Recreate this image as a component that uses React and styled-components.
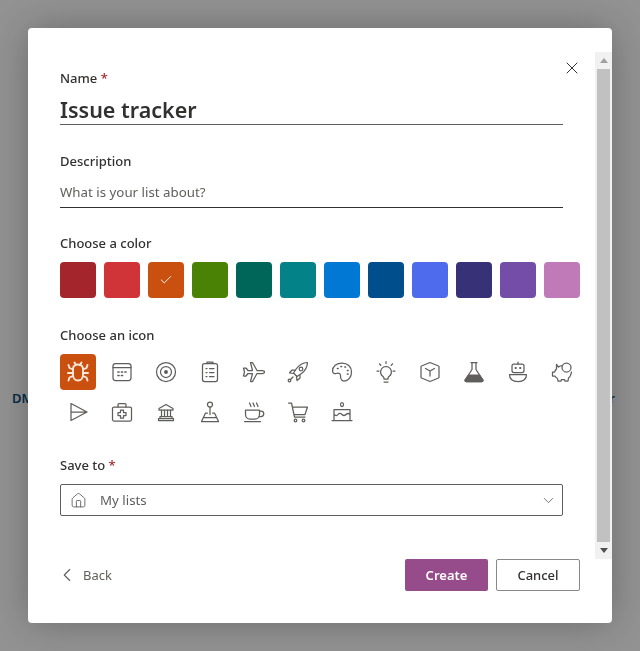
import React from 'react';
import styled, { createGlobalStyle } from 'styled-components';
import { Check, ChevronDown, ChevronLeft, Home, X } from 'lucide-react';

const GlobalStyle = createGlobalStyle`
    html, body {
        margin: 0;
        padding: 0;
        height: 100%;
        overflow: hidden;
        background: #f4f4f4;
        font-family: 'Noto Sans', 'Open Sans', sans-serif;
        color: #323130;
    }
`;

const colors = [
    '#a4262c', '#d13438', '#ca5010', '#498205', '#00665a', '#038387',
    '#0078d4', '#004e8c', '#4f6bed', '#373277', '#744da9', '#c07ab8',
];

const iconShapes = {
    bug: (
        <>
            <path d="M7 9c0-2.5 2-4.5 5-4.5s5 2 5 4.500v6c0 3-2 5.500-5 5.500s-5-2.500-5-5.500z" />
            <path d="M8.500 2.500l1.500 2.500M15.500 2.500L14 5M7 9.500L3.500 8 2.500 5M17 9.500L20.500 8l1-3M7 13H2M17 13h5M7 16l-3.500 1.500-1 3M17 16l3.500 1.500 1 3" />
        </>
    ),
    calendar: (
        <>
            <rect x="3" y="3.500" width="18" height="17" rx="2.500" />
            <path d="M3 7.500h18" />
            <path d="M8 12h1M11.500 12h1M15 12h1M8 15.500h1M11.500 15.500h1" strokeWidth="1.700" />
        </>
    ),
    target: (
        <>
            <circle cx="12" cy="12" r="9.500" />
            <circle cx="12" cy="12" r="5.500" />
            <circle cx="12" cy="12" r="1.300" fill="currentColor" />
        </>
    ),
    clipboard: (
        <>
            <rect x="4.500" y="3.500" width="15" height="18" rx="2" />
            <path d="M9 3.500V2h6v1.500M8 8.500h1M11.500 8.500H16M8 12.500h1M11.500 12.500H16M8 16.500h1M11.500 16.500H16" />
        </>
    ),
    plane: (
        <path d="M22.500 12c0-1-1-1.500-2.500-1.500h-5L10.500 2.500H8.500l2 8H6L4 8H1.500l1 4-1 4H4l2-2.500h4.500l-2 8h2l4.500-8h5c1.500 0 2.500-.5 2.500-1.500z" />
    ),
    rocket: (
        <>
            <path d="M21.500 2.500c-5 .3-8.500 2.500-11 6L7.500 13l3.500 3.500 4.500-3c3.500-2.500 5.700-6 6-11z" />
            <circle cx="15" cy="9" r="1.800" />
            <path d="M9 10H6l-2.500 3 4 .5M14 15v3l-3 2.500-.5-4M7 17l-2.500 2.500" />
            <circle cx="3.500" cy="20.500" r="1.300" />
        </>
    ),
    palette: (
        <>
            <path d="M12 3C6.500 3 2.500 6.500 2.500 11c0 2 2 3 3.500 2.500 2-.7 4.500-.5 4.500 2 0 2 .5 5.500 3.500 5.500 4.500 0 7.500-4 7.500-9 0-5.500-4-9-9.500-9z" />
            <path d="M7.500 8.500h.5M11 6.500h.5M15 7h.5M17.500 10.500h.5M17.500 14h.5" strokeWidth="1.700" />
        </>
    ),
    bulb: (
        <>
            <path d="M12 6.500a5.500 5.500 0 0 0-3 10c.7.5 1 1 1 2v.5h4v-.5c0-1 .3-1.500 1-2a5.500 5.500 0 0 0-3-10z" />
            <path d="M10 22h4M12 1.500v2M5.500 4l1.300 1.300M18.500 4l-1.300 1.300M3 11h2M19 11h2" />
        </>
    ),
    cube: (
        <>
            <path d="M12 2.500l8.500 3.500c.3.100.5.400.5.700v10.600c0 .3-.2.600-.5.700L12 21.500 3.500 18c-.3-.1-.5-.4-.5-.7V6.700c0-.3.2-.6.500-.7z" />
            <path d="M7.500 8.500L12 11l4.500-2.500M12 11v5" />
        </>
    ),
    flask: (
        <>
            <path d="M9 2.500h6M10 2.500v7L3.500 19.500c-.7 1.200 0 2 1 2h15c1 0 1.700-.8 1-2L14 9.500v-7" />
            <path d="M6.500 15h11l3.500 5c.3 1-.3 1.500-1.500 1.500h-15c-1.200 0-1.800-.5-1.500-1.500z" fill="currentColor" />
        </>
    ),
    bot: (
        <>
            <rect x="6" y="4" width="12" height="8.500" rx="2" />
            <path d="M12 2v2M3.500 14.500h17c0 4.500-3.500 7-8.500 7s-8.500-2.500-8.500-7z" />
            <path d="M9.500 8h.5M14 8h.5" strokeWidth="1.800" />
        </>
    ),
    piggy: (
        <>
            <circle cx="16.500" cy="7.500" r="4.500" />
            <path d="M12.500 5.500c-1.500 0-3 .5-4 1.500L6.500 4.500V9C5.500 10 5 11 4.500 12h-2v4H5c.5 1 1.500 2 2.500 2.500L8 21h3l.5-1.500h3L15 21h3l.5-3c1.500-1 2.500-3 3-6" />
        </>
    ),
    play: (
        <path d="M5 3.500L21 12 5 20.500zM5 12h16" />
    ),
    medkit: (
        <>
            <rect x="2.500" y="7" width="19" height="14" rx="1.500" />
            <path d="M8 7V4.500c0-.5.5-1 1-1h6c.5 0 1 .5 1 1V7" />
            <path d="M10.500 10h3v2.500H16v3h-2.500V18h-3v-2.500H8v-3h2.500z" />
        </>
    ),
    bank: (
        <>
            <path d="M12 4.500L5 8.500v1.500h14V8.500z" />
            <path d="M7.500 10v6.500M10.500 10v6.500M13.500 10v6.500M16.500 10v6.500M6 16.500h12v2H6zM4.500 18.500h15v2h-15z" />
        </>
    ),
    joystick: (
        <>
            <circle cx="12" cy="4.500" r="2.500" />
            <path d="M12 7v7.500M9.500 13H7.500L3.500 21.500h17L16.500 13h-2M6 17.500h12" />
        </>
    ),
    coffee: (
        <>
            <path d="M3.500 10h14v4.500c0 2.500-2 4.500-4.500 4.500H8c-2.500 0-4.500-2-4.500-4.500z" />
            <path d="M17.500 11h1.500a2.700 2.700 0 0 1 0 5.500H17M2.500 21.500h16M7.500 3l1.500 3.500M11 3l1.500 3.500M14.500 3L16 6.500" />
        </>
    ),
    cart: (
        <>
            <path d="M2.500 3h3l3 14h10.500M6.500 7h15l-2.500 7.500H8" />
            <circle cx="9.500" cy="20.500" r="1.300" />
            <circle cx="17.500" cy="20.500" r="1.300" />
        </>
    ),
    cake: (
        <>
            <ellipse cx="12" cy="4.500" rx="1.500" ry="2" />
            <path d="M4 9.500h16v11H4zM2 20.500h20M4 14c1.500 2 3 2 4 .5s2.500-1.500 4 0 2.500 1.500 4 0 2.500-1.500 4 0" />
        </>
    ),
};

const iconNames = Object.keys(iconShapes);

const Icon = ({ name, selected }) => (
    <IconTile $selected={selected}>
        <svg width="24" height="24" viewBox="0 0 24 24" fill="none" stroke="currentColor" strokeWidth={selected ? 1.9 : 1.25} strokeLinecap="round" strokeLinejoin="round">
            {iconShapes[name]}
        </svg>
    </IconTile>
);

export default function App() {
    return (
        <>
            <GlobalStyle />
            <Behind>
                <span>DM</span>
                <span>for</span>
            </Behind>
            <Overlay>
                <Dialog>
                    <CloseButton><X size={20} strokeWidth={1.2} /></CloseButton>
                    <Body>
                        <Content>
                            <Label>Name <Required>*</Required></Label>
                            <TitleInput>Issue tracker</TitleInput>

                            <Label $top={26}>Description</Label>
                            <TextInput>What is your list about?</TextInput>

                            <Label $top={25}>Choose a color</Label>
                            <Swatches>
                                {colors.map((c, i) => (
                                    <Swatch key={c} $color={c}>
                                        {i === 2 && <Check size={14} strokeWidth={1.6} />}
                                    </Swatch>
                                ))}
                            </Swatches>

                            <Label $top={27}>Choose an icon</Label>
                            <Icons>
                                {iconNames.map((name, i) => (
                                    <Icon key={name} name={name} selected={i === 0} />
                                ))}
                            </Icons>

                            <Label $top={25}>Save to <Required>*</Required></Label>
                            <Select>
                                <Home size={17} strokeWidth={1.25} color="#605e5c" />
                                <SelectText>My lists</SelectText>
                                <ChevronDown size={17} strokeWidth={1.2} color="#605e5c" />
                            </Select>
                        </Content>
                        <ScrollBar>
                            <ArrowUp />
                            <Thumb />
                            <ArrowDown />
                        </ScrollBar>
                    </Body>
                    <Footer>
                        <BackLink><ChevronLeft size={22} strokeWidth={1.2} />Back</BackLink>
                        <Actions>
                            <PrimaryButton>Create</PrimaryButton>
                            <SecondaryButton>Cancel</SecondaryButton>
                        </Actions>
                    </Footer>
                </Dialog>
            </Overlay>
        </>
    );
}

const Behind = styled.div`
    display: flex;
    justify-content: space-between;
    padding: 390px 25px 0 12px;
    font-size: 13px;
    line-height: 16px;
    font-weight: 600;
    color: #0b4a78;
`;

const Overlay = styled.div`
    position: fixed;
    inset: 0;
    background: rgba(0, 0, 0, 0.4);
`;

const Dialog = styled.div`
    position: absolute;
    left: 28px;
    top: 28px;
    width: 584px;
    height: 595px;
    padding-top: 24px;
    box-sizing: border-box;
    display: flex;
    flex-direction: column;
    background: #fff;
    border-radius: 4px;
    box-shadow: 0 0 40px rgba(0, 0, 0, 0.28);
`;

const CloseButton = styled.div`
    position: absolute;
    top: 30px;
    right: 30px;
    width: 20px;
    height: 20px;
    display: flex;
    color: #323130;
`;

const Body = styled.div`
    display: flex;
    height: 507px;
`;

const Content = styled.div`
    flex: 1;
    padding: 16px 15px 0 32px;
`;

const Label = styled.div`
    margin-top: ${p => p.$top || 0}px;
    font-size: 13px;
    line-height: 20px;
    font-weight: 500;
    color: #323130;
`;

const Required = styled.span`
    color: #a4262c;
`;

const TitleInput = styled.div`
    width: 503px;
    height: 36px;
    line-height: 44px;
    font-size: 21.5px;
    font-weight: 600;
    border-bottom: 1px solid #605e5c;
    overflow: hidden;
`;

const TextInput = styled.div`
    width: 503px;
    height: 36px;
    line-height: 42px;
    font-size: 13.3px;
    color: #605e5c;
    border-bottom: 1px solid #323130;
`;

const Swatches = styled.div`
    display: flex;
    gap: 8px;
    margin-top: 9px;
`;

const Swatch = styled.div`
    width: 36px;
    height: 36px;
    border-radius: 4px;
    background: ${p => p.$color};
    color: #fff;
    display: flex;
    align-items: center;
    justify-content: center;
`;

const Icons = styled.div`
    display: grid;
    grid-template-columns: repeat(12, 36px);
    grid-auto-rows: 36px;
    gap: 4px 8px;
    margin-top: 9px;
`;

const IconTile = styled.div`
    display: flex;
    align-items: center;
    justify-content: center;
    border-radius: 4px;
    color: ${p => (p.$selected ? '#ffe9dc' : '#605e5c')};
    background: ${p => (p.$selected ? '#ca5010' : 'transparent')};
`;

const Select = styled.div`
    width: 503px;
    height: 32px;
    margin-top: 9px;
    box-sizing: border-box;
    padding: 0 5px 0 9px;
    display: flex;
    align-items: center;
    border: 1px solid #605e5c;
    border-radius: 2px;
`;

const SelectText = styled.span`
    flex: 1;
    margin-left: 13px;
    font-size: 13.3px;
    color: #605e5c;
`;

const ScrollBar = styled.div`
    width: 17px;
    display: flex;
    flex-direction: column;
    align-items: center;
    background: #f1f1f1;
`;

const ArrowUp = styled.div`
    width: 0;
    height: 0;
    margin: 6px 0;
    border: 4px solid transparent;
    border-top: 0;
    border-bottom: 5px solid #a0a0a0;
`;

const Thumb = styled.div`
    flex: 1;
    width: 13px;
    background: #c1c1c1;
`;

const ArrowDown = styled.div`
    width: 0;
    height: 0;
    margin: 6px 0;
    border: 4px solid transparent;
    border-bottom: 0;
    border-top: 5px solid #505050;
`;

const Footer = styled.div`
    display: flex;
    align-items: flex-start;
    justify-content: space-between;
    padding: 0 32px;
`;

const BackLink = styled.div`
    display: flex;
    align-items: center;
    gap: 5px;
    height: 32px;
    font-size: 13px;
    color: #605e5c;
    margin-left: -4px;
`;

const Actions = styled.div`
    display: flex;
    gap: 8px;
`;

const PrimaryButton = styled.div`
    width: 83px;
    height: 32px;
    display: flex;
    align-items: center;
    justify-content: center;
    font-size: 13px;
    font-weight: 600;
    color: #fff;
    background: #964b8a;
    border-radius: 2px;
`;

const SecondaryButton = styled.div`
    width: 84px;
    height: 32px;
    box-sizing: border-box;
    display: flex;
    align-items: center;
    justify-content: center;
    font-size: 13px;
    font-weight: 500;
    color: #323130;
    border: 1px solid #8a8886;
    border-radius: 2px;
`;
